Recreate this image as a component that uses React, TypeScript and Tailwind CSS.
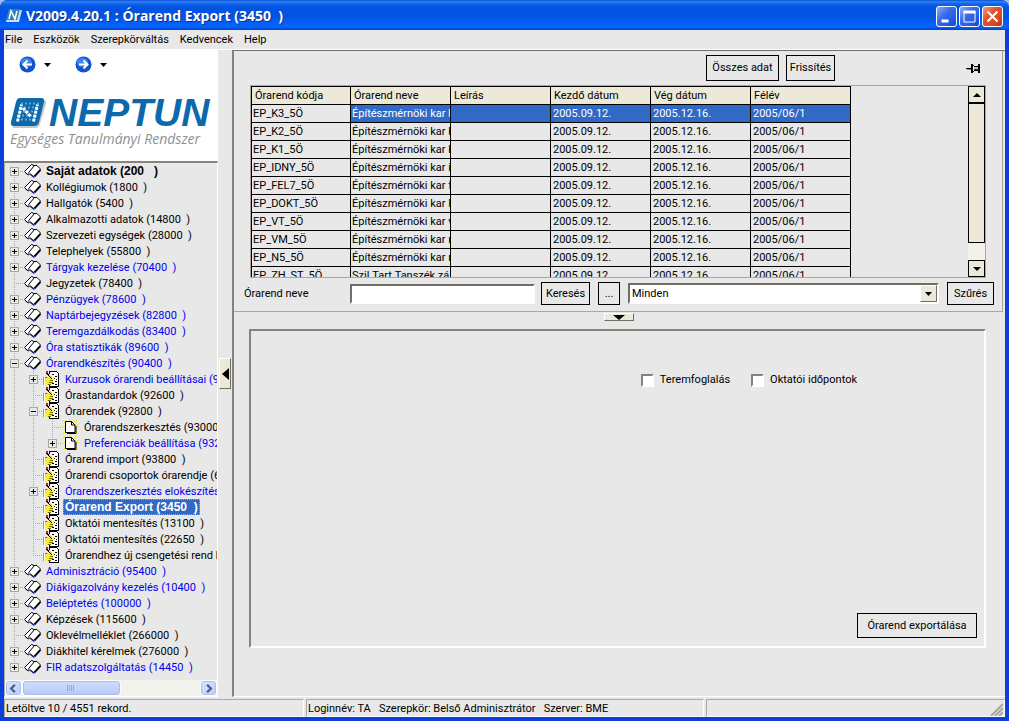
import { useState } from "react";
import type { ReactNode } from "react";

type IconName = "book" | "note" | "page";

interface TreeItem {
  label: string;
  level: number;
  icon: IconName;
  box?: "plus" | "minus";
  blue?: boolean;
  bold?: boolean;
  lastChild?: boolean;
}

const treeItems: TreeItem[] = [
  { label: "Saját adatok (200   )", level: 0, icon: "book", box: "plus", bold: true },
  { label: "Kollégiumok (1800  )", level: 0, icon: "book", box: "plus" },
  { label: "Hallgatók (5400  )", level: 0, icon: "book", box: "plus" },
  { label: "Alkalmazotti adatok (14800  )", level: 0, icon: "book", box: "plus" },
  { label: "Szervezeti egységek (28000  )", level: 0, icon: "book", box: "plus" },
  { label: "Telephelyek (55800  )", level: 0, icon: "book", box: "plus" },
  { label: "Tárgyak kezelése (70400  )", level: 0, icon: "book", box: "plus", blue: true },
  { label: "Jegyzetek (78400  )", level: 0, icon: "book" },
  { label: "Pénzügyek (78600  )", level: 0, icon: "book", box: "plus", blue: true },
  { label: "Naptárbejegyzések (82800  )", level: 0, icon: "book", box: "plus", blue: true },
  { label: "Teremgazdálkodás (83400  )", level: 0, icon: "book", box: "plus", blue: true },
  { label: "Óra statisztikák (89600  )", level: 0, icon: "book", box: "plus", blue: true },
  { label: "Órarendkészítés (90400  )", level: 0, icon: "book", box: "minus", blue: true },
  { label: "Kurzusok órarendi beállításai (90", level: 1, icon: "note", box: "plus", blue: true },
  { label: "Órastandardok (92600  )", level: 1, icon: "note" },
  { label: "Órarendek (92800  )", level: 1, icon: "note", box: "minus" },
  { label: "Órarendszerkesztés (93000", level: 2, icon: "page" },
  { label: "Preferenciák beállítása (932", level: 2, icon: "page", box: "plus", blue: true, lastChild: true },
  { label: "Órarend import (93800  )", level: 1, icon: "note" },
  { label: "Órarendi csoportok órarendje (65", level: 1, icon: "note" },
  { label: "Órarendszerkesztés elokészítése", level: 1, icon: "note", box: "plus", blue: true },
  { label: "Órarend Export (3450  )", level: 1, icon: "note", bold: true },
  { label: "Oktatói mentesítés (13100  )", level: 1, icon: "note" },
  { label: "Oktatói mentesítés (22650  )", level: 1, icon: "note" },
  { label: "Órarendhez új csengetési rend b", level: 1, icon: "note", lastChild: true },
  { label: "Adminisztráció (95400  )", level: 0, icon: "book", box: "plus", blue: true },
  { label: "Diákigazolvány kezelés (10400  )", level: 0, icon: "book", box: "plus", blue: true },
  { label: "Beléptetés (100000  )", level: 0, icon: "book", box: "plus", blue: true },
  { label: "Képzések (115600  )", level: 0, icon: "book", box: "plus" },
  { label: "Oklevélmelléklet (266000  )", level: 0, icon: "book" },
  { label: "Diákhitel kérelmek (276000  )", level: 0, icon: "book", box: "plus" },
  { label: "FIR adatszolgáltatás (14450  )", level: 0, icon: "book", box: "plus", blue: true, lastChild: true },
];

const columns = ["Órarend kódja", "Órarend neve", "Leírás", "Kezdő dátum", "Vég dátum", "Félév"];

const rows = [
  ["EP_K3_5Ö", "Építészmérnöki kar k"],
  ["EP_K2_5Ö", "Építészmérnöki kar k"],
  ["EP_K1_5Ö", "Építészmérnöki kar k"],
  ["EP_IDNY_5Ö", "Építészmérnöki kar i"],
  ["EP_FEL7_5Ö", "Építészmérnöki kar f"],
  ["EP_DOKT_5Ö", "Építészmérnöki kar F"],
  ["EP_VT_5Ö", "Építészmérnöki kar v"],
  ["EP_VM_5Ö", "Építészmérnöki kar r"],
  ["EP_N5_5Ö", "Építészmérnöki kar r"],
  ["EP_ZH_ST_5Ö", "Szil.Tart.Tanszék zá"],
].map(([code, name]) => [code, name, "", "2005.09.12.", "2005.12.16.", "2005/06/1"]);

export default function App() {
  return (
    <div className="flex h-screen flex-col overflow-hidden bg-[#9db9eb] font-[Roboto,'Liberation_Sans',sans-serif] text-[11px] leading-4 text-black">
      <div className="flex min-h-0 flex-1 flex-col overflow-hidden rounded-t-lg bg-[#0a3fdc]">
        <TitleBar />
        <div className="mx-1 mb-1 flex min-h-0 flex-1 flex-col bg-[#e8e8e8]">
          <MenuBar />
          <div className="flex min-h-0 flex-1">
            <Sidebar />
            <div className="flex w-3.5 shrink-0 flex-col items-center">
              <button
                type="button"
                aria-label="Hide navigation"
                className="mt-[308px] grid h-[31px] w-3 place-items-center border border-t-white border-r-[#716f64] border-b-[#716f64] border-l-white bg-[#ece9d8]"
              >
                <svg width="7" height="12" viewBox="0 0 7 12" aria-hidden="true"><path d="M7 0v12L0 6z" /></svg>
              </button>
            </div>
            <MainPanel />
          </div>
          <StatusBar />
        </div>
      </div>
    </div>
  );
}

function TitleBar() {
  return (
    <header className="flex h-[30px] shrink-0 items-center bg-[linear-gradient(180deg,#0a4fd0_0%,#2f83f8_6%,#1268ee_12%,#0253e0_24%,#0254e4_55%,#0364fc_85%,#025cf5_93%,#0140c0_100%)] px-1.5 pt-0.5">
      <svg width="16" height="16" viewBox="0 0 16 16" aria-hidden="true">
        <path d="M3 2h13l-3 12H0z" fill="#c9dcf0" />
        <path d="M3 1h11l-3 11H0z" fill="#2b7fc0" />
        <path d="M3 11l2-8 4 8 2-8" fill="none" stroke="#fff" strokeWidth="1.600" />
      </svg>
      <h1 className="ml-1 whitespace-pre font-['Open_Sans',sans-serif] text-[14px] font-bold text-white [text-shadow:1px_1px_0_#0a2f8f]">
        V2009.4.20.1 : Órarend Export (3450  )
      </h1>
      <div className="ml-auto flex gap-0.5">
        <WindowButton label="Minimize"><path d="M5 13h7v3H5z" fill="#fff" /></WindowButton>
        <WindowButton label="Maximize"><path d="M4.500 5v10.500h11V5z" fill="none" stroke="#fff" /><path d="M4 4h12v3H4z" fill="#fff" /></WindowButton>
        <WindowButton label="Close" red><path d="M5 5l10 10M15 5L5 15" stroke="#fff" strokeWidth="2.200" /></WindowButton>
      </div>
    </header>
  );
}

function WindowButton({ label, red, children }: { label: string; red?: boolean; children: ReactNode }) {
  return (
    <button
      type="button"
      aria-label={label}
      className={[
        "grid size-[21px] place-items-center rounded-[3px] border border-white",
        red
          ? "bg-[linear-gradient(135deg,#f0a088_0%,#e0502a_40%,#d8431c_80%,#b8300c_100%)]"
          : "bg-[linear-gradient(135deg,#8caef8_0%,#3a6cec_40%,#2558e0_75%,#1a48c8_100%)]",
      ].join(" ")}
    >
      <svg width="19" height="19" viewBox="0.5 0.5 19 19" aria-hidden="true">{children}</svg>
    </button>
  );
}

function MenuBar() {
  return (
    <nav className="flex h-5 shrink-0 items-center gap-[11px] border-b border-white px-px">
      {["File", "Eszközök", "Szerepkörváltás", "Kedvencek", "Help"].map((item) => (
        <button key={item} type="button">{item}</button>
      ))}
    </nav>
  );
}

function Sidebar() {
  return (
    <aside className="flex w-[214px] shrink-0 flex-col">
      <div className="h-[111px] shrink-0 bg-white">
        <div className="flex items-center gap-6 pt-1.5 pl-[15px]">
          <NavButton label="Back"><path d="M13 8.500H5M8.500 4.500l-4 4 4 4" /></NavButton>
          <NavButton label="Forward"><path d="M4 8.500h8M8.500 4.500l4 4-4 4" /></NavButton>
        </div>
        <div className="mt-5 flex items-center gap-0.5 pl-1.5">
          <LogoMark />
          <span className="font-['Liberation_Sans',Arial,sans-serif] text-[39px] leading-10 font-bold text-[#0c69ac] italic">NEPTUN</span>
        </div>
        <p className="pl-1.5 font-['Open_Sans',sans-serif] text-[14px] leading-3 whitespace-nowrap text-[#8e9194] italic">
          Egységes Tanulmányi Rendszer
        </p>
      </div>
      <div className="flex min-h-0 flex-1 flex-col border-t-2 border-r border-b border-l border-t-[#85837a] border-r-white border-b-white border-l-[#aca899]">
        <ul className="min-h-0 flex-1 overflow-hidden">
          {treeItems.map((item, i) => (
            <TreeRow key={item.label} item={item} first={i === 0} last={i === treeItems.length - 1} />
          ))}
        </ul>
        <div className="flex h-4 shrink-0 bg-[#f3f2ec]">
          <ScrollButton label="Scroll left" d="M9 4L5 8l4 4" />
          <div className="flex-1">
            <div className="grid h-4 w-[99px] place-items-center rounded-sm border border-white bg-[linear-gradient(180deg,#cddbfd_0%,#c2d4fc_60%,#b3c6f5_100%)] shadow-[inset_0_0_0_1px_#a9bff0]">
              <svg width="9" height="6" viewBox="0 0 9 6" aria-hidden="true"><path d="M.5 0v6M2.500 0v6M4.500 0v6M6.500 0v6" stroke="#8ea8e0" /></svg>
            </div>
          </div>
          <ScrollButton label="Scroll right" d="M6 4l4 4-4 4" />
        </div>
      </div>
    </aside>
  );
}

function NavButton({ label, children }: { label: string; children: ReactNode }) {
  return (
    <button type="button" aria-label={label} className="flex items-center gap-2">
      <svg width="17" height="17" viewBox="0 0 17 17" aria-hidden="true">
        <circle cx="8.500" cy="8.500" r="8" fill="#1254cc" />
        <ellipse cx="7.500" cy="6.500" rx="5.500" ry="4.500" fill="#3b86ee" />
        <g fill="none" stroke="#fff" strokeWidth="2">{children}</g>
      </svg>
      <svg width="7" height="4" viewBox="0 0 7 4" aria-hidden="true"><path d="M0 0h7L3.500 4z" /></svg>
    </button>
  );
}

function LogoMark() {
  return (
    <svg width="37" height="34" viewBox="0 0 37 34" aria-hidden="true">
      <path d="M12 4h21q4 0 3 4l-6 20q-1 4-5 4H5q-4 0-2-3z" fill="#c4c6c8" />
      <path d="M10 2h21q4 0 3 4l-5 20q-1 4-5 4H4q-4 0-3-4L6 6q1-4 4-4z" fill="#0c69ac" />
      <g fill="none" stroke="#a8cbe6" strokeWidth="2" strokeDasharray="2 2">
        <path d="M11 7.500h19M10 11.500h19M9 15.500h19M8 19.500h19M7 23.500h19" opacity=".6" />
      </g>
      <g fill="none" stroke="#fff" strokeWidth="3" strokeDasharray="3 1">
        <path d="M7.500 25.500l4-17M13 12l8 9M23.500 25.500l4-17" />
      </g>
    </svg>
  );
}

function ScrollButton({ label, d }: { label: string; d: string }) {
  return (
    <button type="button" aria-label={label} className="grid h-4 w-[17px] shrink-0 place-items-center rounded-sm border border-white bg-[linear-gradient(135deg,#dbe5ff,#b9cbf8)] shadow-[inset_0_0_0_1px_#a9bff0]">
      <svg width="15" height="15" viewBox="0 0 15 16" aria-hidden="true"><path d={d} fill="none" stroke="#4d6185" strokeWidth="2.500" /></svg>
    </button>
  );
}

function TreeRow({ item, first, last }: { item: TreeItem; first: boolean; last: boolean }) {
  const selected = item.label.startsWith("Órarend Export");
  return (
    <li className="flex h-4 items-center whitespace-pre">
      {item.level > 0 && <Connector through />}
      {item.level > 1 && <Connector through />}
      <Connector branch box={item.box} top={!first} bottom={!last && !item.lastChild} />
      <span className="h-4 w-5 shrink-0">
        {item.icon === "book" && <BookIcon />}
        {item.icon === "note" && <NoteIcon />}
        {item.icon === "page" && <PageIcon />}
      </span>
      <button
        type="button"
        className={[
          "h-4 shrink-0 px-0.5 text-left",
          item.bold ? "font-['Liberation_Sans',Arial,sans-serif] text-[12px] leading-4 font-bold" : "leading-[18px]",
          item.blue ? "text-[#0000f0]" : "",
          selected ? "bg-[#316ac5] text-white outline-1 -outline-offset-1 outline-dotted outline-[#d8a050]" : "",
        ].join(" ")}
      >
        {item.label}
      </button>
    </li>
  );
}

// one 19px indent cell: dotted guide lines plus the expand box
function Connector({ through, branch, box, top, bottom }: { through?: boolean; branch?: boolean; box?: "plus" | "minus"; top?: boolean; bottom?: boolean }) {
  return (
    <svg className="shrink-0" width="19" height="16" viewBox="0 0 19 16" shapeRendering="crispEdges" aria-hidden="true">
      <g stroke="#aca899" strokeDasharray="1 1" fill="none">
        {(through || top) && <path d="M9.500 0v8" />}
        {(through || bottom) && <path d="M9.500 8v8" />}
        {branch && <path d="M9 8.500h10" />}
      </g>
      {box && (
        <>
          <path d="M5.500 4.500h8v8h-8z" fill="#e8e8e8" stroke="#aca899" />
          <path d={box === "plus" ? "M7 8.500h5M9.500 6v5" : "M7 8.500h5"} stroke="#000" />
        </>
      )}
    </svg>
  );
}

function MainPanel() {
  return (
    <main className="flex min-w-0 flex-1 flex-col border-t border-b border-l-2 border-t-[#716f64] border-b-white border-l-[#85837a] pr-0.5">
      <section className="flex h-[261px] shrink-0 flex-col border-r border-b border-[#aca899]">
        <div className="flex items-center justify-end pt-1 pr-[21px]">
          <FlatButton size="h-[26px] w-[73px]">Összes adat</FlatButton>
          <span className="w-[7px]" />
          <FlatButton size="h-[26px] w-[49px]">Frissítés</FlatButton>
          <button type="button" aria-label="Pin panel" className="ml-[131px]">
            <svg width="15" height="11" viewBox="0 0 15 11" shapeRendering="crispEdges" aria-hidden="true">
              <path d="M0 5h6v1H0z" />
              <path d="M1 6h5v1H1z" fill="#888" />
              <path d="M5 1h2v9H5zM7 2h1v1H7zM7 8h1v1H7zM8 3h4v1H8zM8 7h4v1H8zM12 1h2v9h-2z" />
              <path d="M7 3h1v5H7z" fill="#fff" />
              <path d="M8 4h4v2H8z" fill="#bbb" />
              <path d="M8 6h5v1H8z" fill="#333" />
            </svg>
          </button>
        </div>
        <div className="mx-4 mt-1 flex h-[193px] overflow-hidden border border-[#aca899]">
          <div className="min-w-0 flex-1 overflow-hidden">
            <table className="w-[600px] table-fixed border-collapse">
              <thead>
                <tr>
                  {columns.map((column, i) => (
                    <th
                      key={column}
                      className={[
                        "h-[18px] border border-black bg-[#ece9d8] px-[3px] py-0 text-left font-normal",
                        i === 0 ? "w-[99px]" : "w-[100px]",
                      ].join(" ")}
                    >
                      {column}
                    </th>
                  ))}
                </tr>
              </thead>
              <tbody>
                {rows.map((row, r) => (
                  <tr key={row[0]}>
                    {row.map((cell, c) => (
                      <td
                        key={c}
                        className={[
                          "h-[18px] overflow-hidden border border-black py-0 whitespace-nowrap",
                          c > 2 ? "px-0.5" : "px-px",
                          r === 0 && c > 0 ? "bg-[#316ac5] text-white" : "",
                        ].join(" ")}
                      >
                        {cell}
                      </td>
                    ))}
                  </tr>
                ))}
              </tbody>
            </table>
          </div>
          <div className="flex w-[17px] shrink-0 flex-col bg-[#f4f2e8]">
            <GridScrollButton label="Scroll up" d="M4 0l4 4H0z" />
            <div className="h-[140px] border border-black bg-[#ece9d8]" />
            <div className="flex-1" />
            <GridScrollButton label="Scroll down" d="M0 0h8L4 4z" />
          </div>
        </div>
        <SearchRow />
      </section>
      <div className="flex justify-center pt-px">
        <button type="button" aria-label="Collapse upper panel" className="grid h-2 w-[30px] place-items-center border border-t-white border-r-[#716f64] border-b-[#716f64] border-l-white bg-[#ece9d8]">
          <svg width="12" height="5" viewBox="0 0 12 5" aria-hidden="true"><path d="M0 0h12L6 5z" /></svg>
        </button>
      </div>
      <ExportPanel />
    </main>
  );
}

function GridScrollButton({ label, d }: { label: string; d: string }) {
  return (
    <button type="button" aria-label={label} className="grid h-[17px] shrink-0 place-items-center border border-black bg-[#ece9d8]">
      <svg width="8" height="4" viewBox="0 0 8 4" aria-hidden="true"><path d={d} /></svg>
    </button>
  );
}

function SearchRow() {
  return (
    <form className="flex items-center pt-1 pr-2 pl-2.5" onSubmit={(e) => e.preventDefault()}>
      <label htmlFor="name" className="w-[106px] shrink-0">Órarend neve</label>
      <input id="name" type="text" className="h-5 w-[185px] border-2 border-t-[#716f64] border-r-white border-b-white border-l-[#716f64] bg-white px-0.5 outline-none" />
      <span className="w-1.5" />
      <FlatButton size="h-[23px] w-[49px]">Keresés</FlatButton>
      <span className="w-2" />
      <FlatButton size="h-[23px] w-[22px]">...</FlatButton>
      <div className="relative mx-2 h-[21px] min-w-0 flex-1 border-2 border-t-[#716f64] border-r-white border-b-white border-l-[#716f64] bg-white">
        <select aria-label="Szűrő" className="h-full w-full appearance-none px-0.5 outline-none">
          <option>Minden</option>
        </select>
        <span className="pointer-events-none absolute inset-y-0 right-0 grid w-[17px] place-items-center border border-t-white border-r-[#716f64] border-b-[#716f64] border-l-white bg-[#ece9d8]">
          <svg width="7" height="4" viewBox="0 0 7 4" aria-hidden="true"><path d="M0 0h7L3.500 4z" /></svg>
        </span>
      </div>
      <FlatButton size="h-[23px] w-[47px]">Szűrés</FlatButton>
    </form>
  );
}

function ExportPanel() {
  const [rooms, setRooms] = useState(false);
  const [dates, setDates] = useState(false);
  return (
    <section className="mt-2 mr-[17px] mb-12 ml-[15px] flex flex-1 flex-col border-2 border-t-[#85837a] border-r-white border-b-white border-l-[#85837a]">
      <div className="flex justify-end gap-[21px] pt-[41px] pr-[127px]">
        <CheckField id="rooms" label="Teremfoglalás" checked={rooms} onChange={setRooms} />
        <CheckField id="dates" label="Oktatói időpontok" checked={dates} onChange={setDates} />
      </div>
      <div className="mt-auto flex justify-end pr-[7px] pb-2">
        <FlatButton size="h-[25px] w-[120px]">Órarend exportálása</FlatButton>
      </div>
    </section>
  );
}

function CheckField({ id, label, checked, onChange }: { id: string; label: string; checked: boolean; onChange: (value: boolean) => void }) {
  return (
    <div className="flex items-center gap-1.5">
      <input
        id={id}
        type="checkbox"
        checked={checked}
        onChange={(e) => onChange(e.target.checked)}
        className="size-[13px] appearance-none border-2 border-t-[#85837a] border-r-white border-b-white border-l-[#85837a] bg-white checked:bg-black"
      />
      <label htmlFor={id}>{label}</label>
    </div>
  );
}

function FlatButton({ size, children }: { size: string; children: ReactNode }) {
  return (
    <button type="button" className={`shrink-0 border border-black bg-[#e8e8e8] whitespace-nowrap ${size}`}>
      {children}
    </button>
  );
}

function StatusBar() {
  const cell = "border border-t-[#aca899] border-r-white border-b-white border-l-[#aca899] px-px leading-[18px] whitespace-pre";
  return (
    <footer className="mt-0.5 flex h-[18px] shrink-0 gap-0.5">
      <div className={`${cell} w-[300px]`}>Letöltve 10 / 4551 rekord.</div>
      <div className={`${cell} w-[398px]`}>Loginnév: TA   Szerepkör: Belső Adminisztrátor   Szerver: BME</div>
      <div className={`${cell} flex flex-1 items-end justify-end`}>
        <svg width="13" height="13" viewBox="0 0 13 13" aria-hidden="true"><path d="M1 13L13 1M5 13l8-8M9 13l4-4" stroke="#aca899" strokeWidth="2" /></svg>
      </div>
    </footer>
  );
}

const BookIcon = () => (
  <svg width="17" height="16" viewBox="0 0 17 16" aria-hidden="true">
    <path d="M1 9.500L4.500 12M6 11.500l4 3L17 7" fill="none" stroke="#2020c0" />
    <path d="M.5 8.500L7.500 1.500l2.500 1h3L16.500 6l-7 7.500-3-2.500-3 .5z" fill="#fff" stroke="#000" />
    <path d="M10 3L4 10.500" fill="none" stroke="#000" />
    <path d="M10.500 13.500l6-6.500" stroke="#000" strokeWidth="1.500" />
  </svg>
);

const NoteIcon = () => (
  <svg width="17" height="16" viewBox="0 0 17 16" shapeRendering="crispEdges" aria-hidden="true">
    <path d="M6.500.500h7l2 2v13h-9z" fill="#fff" stroke="#000" />
    <path d="M9 3h2v1H9zM12 5h2v1h-2zM11 7h1v1h-1zM13 8h1v1h-1zM12 10h2v1h-2zM9 12h2v1H9zM12 13h2v1h-2z" />
    <path d="M0 6h1v8H0z" fill="#00d8e8" />
    <path d="M1 6h1v8H1z" fill="#fff" />
    <path d="M2 6h3l2-1 4 3-1 2v2l-3 2H2z" fill="#f5ee30" />
    <path d="M2 6h2M7 9h3M6 11h4M5 13h3" stroke="#7a6a00" />
    <path d="M3.500 1.500l6 6.500" stroke="#000" strokeWidth="2" />
    <path d="M5 2l5 6" stroke="#ffe820" />
    <path d="M3 0h2v2H3z" fill="#c02020" />
  </svg>
);

const PageIcon = () => (
  <svg width="17" height="16" viewBox="0 0 17 16" aria-hidden="true">
    <path d="M1 1l3 3M15 1l-3 3M0 8h3M13 8h4M1 15l3-3M16 15l-3-3M8 0v3" stroke="#f8f020" strokeWidth="1.500" />
    <path d="M3.500 2.500h6l3.500 3.500v7.500H3.500z" fill="#fff" stroke="#000" />
    <path d="M9.500 2.500V6H13M14 7v7.500H5" fill="none" stroke="#000" />
  </svg>
);
